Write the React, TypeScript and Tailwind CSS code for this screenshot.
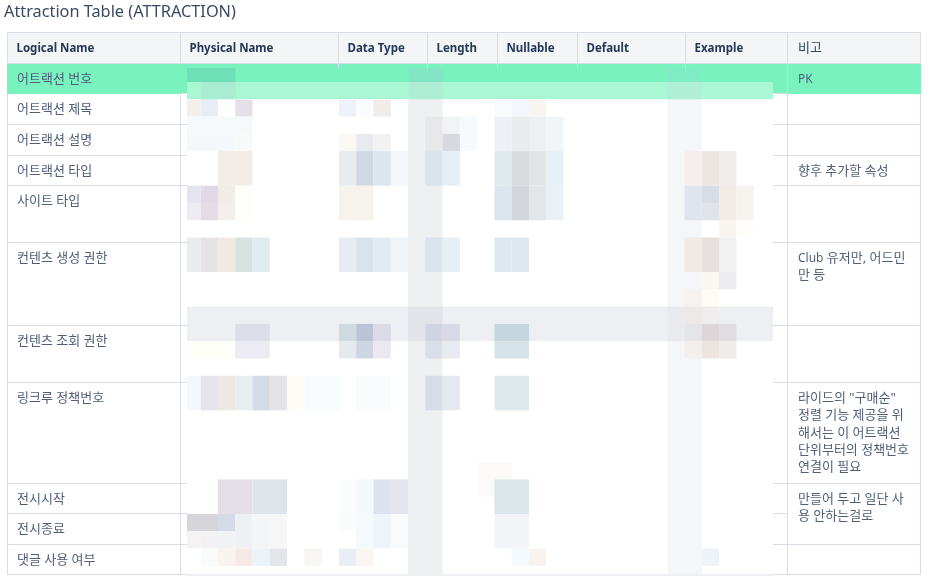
import type { ReactNode } from "react";

const STEP = 17.28;
const X0 = 183.4;
const Y0 = 82;

// [firstCol, firstRow, colSpan, rowSpan, colour]
const blocks: [number, number, number, number, string][] = [
  [13, -1, 2, 30, "#eff0f2"],
  [28, -1, 2, 30, "#f5f6f8"],
  [0, 1, 1, 1, "#f3efea"], [1, 1, 1, 1, "#e8edf4"], [3, 1, 1, 1, "#e5e0e8"],
  [9, 1, 1, 1, "#eef1f7"], [10, 1, 1, 1, "#fbfcfd"], [11, 1, 1, 1, "#f0ecea"],
  [18, 1, 1, 1, "#fafbfd"], [19, 1, 1, 1, "#f3f7fc"], [20, 1, 1, 1, "#f8f4ef"],
  [0, 2, 4, 1, "#f5f9fc"], [14, 2, 1, 2, "#e8e8ea"], [15, 2, 1, 1, "#f2f3f4"], [16, 2, 1, 2, "#f7fafd"],
  [18, 2, 1, 2, "#edf1f5"], [19, 2, 1, 2, "#e9ebed"], [20, 2, 1, 2, "#eeeff0"], [21, 2, 1, 2, "#f2f5f8"],
  [0, 3, 3, 1, "#f4f8fb"], [3, 3, 1, 1, "#f8faf9"], [9, 3, 1, 1, "#fbf8f3"], [10, 3, 1, 1, "#e9eaed"],
  [11, 3, 1, 1, "#f2f2f2"], [15, 3, 1, 1, "#d8d8df"],
  [2, 4, 2, 2, "#f3ede7"], [9, 4, 1, 2, "#e8ecee"], [10, 4, 1, 2, "#d0d8e3"], [11, 4, 1, 2, "#dde6ee"],
  [12, 4, 1, 2, "#f3f7fb"], [14, 4, 1, 2, "#dbe3ed"], [15, 4, 1, 2, "#e6edf5"],
  [18, 4, 1, 2, "#dfe9ee"], [19, 4, 1, 2, "#d8dcde"], [20, 4, 1, 2, "#e0e4e5"], [21, 4, 1, 2, "#e6f0f6"],
  [29, 4, 1, 2, "#f4efec"], [30, 4, 1, 2, "#ece5e2"], [31, 4, 1, 2, "#f0edec"],
  [0, 6, 1, 1, "#e6e4ee"], [1, 6, 1, 1, "#e0d9e5"], [2, 6, 1, 1, "#f0ece8"], [3, 6, 1, 2, "#fefefb"],
  [0, 7, 1, 1, "#eeebf2"], [1, 7, 1, 1, "#e4dde6"], [2, 7, 1, 1, "#f1eeeb"],
  [9, 6, 2, 2, "#f6f2ec"],
  [18, 6, 1, 2, "#dae5ee"], [19, 6, 1, 2, "#d3d7dc"], [20, 6, 1, 2, "#e3e6e8"], [21, 6, 1, 2, "#e9f1f7"],
  [29, 6, 1, 2, "#e0e4ec"], [30, 6, 1, 1, "#d8dce5"], [30, 7, 1, 1, "#e0e3ea"],
  [31, 6, 1, 2, "#f0ebe5"], [32, 6, 1, 2, "#f6f3ee"], [31, 8, 1, 1, "#f8f5f1"], [32, 8, 1, 1, "#fffdf9"],
  [0, 9, 1, 2, "#e9ebed"], [1, 9, 1, 2, "#e6e3e5"], [2, 9, 1, 2, "#f1e9e4"], [3, 9, 1, 2, "#d8e2e0"], [4, 9, 1, 2, "#e0ebf0"],
  [9, 9, 1, 2, "#e7ebf3"], [10, 9, 1, 2, "#d8e3ee"], [11, 9, 1, 2, "#e0ebf3"], [12, 9, 1, 2, "#eef4f8"],
  [14, 9, 1, 2, "#dae3ed"], [15, 9, 1, 2, "#e7eff6"], [18, 9, 1, 2, "#dde9ee"], [19, 9, 1, 2, "#dfe8ef"],
  [29, 9, 1, 2, "#f0e9e4"], [30, 9, 1, 2, "#e8e0de"], [31, 9, 1, 2, "#f1f0f2"],
  [30, 11, 1, 1, "#faf6f2"], [31, 11, 1, 1, "#ebebf0"], [29, 12, 1, 1, "#f6f2ef"], [30, 12, 1, 1, "#fffbf6"],
  [0, 13, 35, 2, "#eeeff3"], [13, 13, 2, 2, "#e3e4ea"], [28, 13, 1, 2, "#e9eaee"], [29, 13, 1, 1, "#ede9e8"], [30, 13, 1, 1, "#f0eeec"],
  [3, 14, 2, 1, "#dcdde6"], [9, 14, 1, 1, "#d0d8e0"], [10, 14, 1, 1, "#bcc3d4"], [11, 14, 1, 1, "#dcdae6"],
  [14, 14, 1, 1, "#d0d4e0"], [15, 14, 1, 1, "#d8d9e4"], [18, 14, 2, 1, "#c5d6df"],
  [29, 14, 1, 1, "#e4e5e7"], [30, 14, 1, 1, "#dcd6d6"], [31, 14, 1, 1, "#e0dde0"],
  [0, 15, 3, 1, "#fefef9"], [3, 15, 2, 1, "#ecebf3"], [9, 15, 1, 1, "#e4eaec"], [10, 15, 1, 1, "#cdd4e2"], [11, 15, 1, 1, "#ece8f2"],
  [14, 15, 1, 1, "#dadee8"], [15, 15, 1, 1, "#e8eaf1"], [18, 15, 2, 1, "#d6e4ea"],
  [29, 15, 1, 1, "#f3efed"], [30, 15, 1, 1, "#ece4e1"], [31, 15, 1, 1, "#f0ecea"],
  [0, 17, 1, 2, "#f4f7fb"], [1, 17, 1, 2, "#e4e4ea"], [2, 17, 1, 2, "#ece8e4"], [3, 17, 1, 2, "#e8eef0"],
  [4, 17, 1, 2, "#d3dbe6"], [5, 17, 1, 2, "#e4e3e7"], [6, 17, 1, 2, "#fffbf7"], [7, 17, 2, 2, "#f8fbfd"],
  [10, 17, 2, 2, "#fafbfc"], [14, 17, 1, 2, "#d8dce6"], [15, 17, 1, 2, "#e6e8f0"], [18, 17, 2, 2, "#dde7ec"],
  [17, 22, 2, 2, "#fdfbfa"],
  [2, 23, 2, 2, "#e4dfe6"], [4, 23, 2, 2, "#dfe4ea"], [9, 23, 1, 2, "#fafcfd"], [10, 23, 1, 2, "#f3f8fa"],
  [11, 23, 1, 2, "#dce2ee"], [12, 23, 1, 2, "#e4e4ee"], [18, 23, 2, 2, "#dce6ea"],
  [0, 25, 2, 1, "#d6d6da"], [2, 25, 1, 1, "#d4dbe6"], [3, 25, 1, 2, "#edf1f3"], [4, 25, 1, 2, "#f3f5f6"], [5, 25, 1, 2, "#f6f6f6"],
  [9, 25, 1, 1, "#fafbfc"], [10, 25, 1, 2, "#f5f9fb"], [11, 25, 1, 2, "#eff4f9"], [12, 25, 1, 2, "#f9fafc"], [18, 25, 2, 2, "#f2f4f7"],
  [0, 26, 1, 1, "#f4f2f3"], [1, 26, 1, 1, "#f2f1f3"], [2, 26, 1, 1, "#f0f2f3"],
  [1, 27, 1, 1, "#f9fafa"], [2, 27, 1, 1, "#f9f3ef"], [3, 27, 1, 1, "#f4e9e4"], [4, 27, 1, 1, "#ebf2f8"], [5, 27, 1, 1, "#e3e5e9"],
  [7, 27, 1, 1, "#f7f6f4"], [9, 27, 1, 1, "#e9eef5"], [10, 27, 1, 1, "#f9f6f1"], [19, 27, 1, 1, "#f3f9fc"], [20, 27, 1, 1, "#f8f3ee"],
  [30, 27, 1, 1, "#eef3f7"],
];

function Mosaic() {
  return (
    <svg className="absolute left-0 top-0 pointer-events-none" width={936} height={583} viewBox="0 0 936 583">
      <defs>
        <clipPath id="mosaic-clip">
          <rect x={187} y={99.3} width={586} height={475} />
        </clipPath>
      </defs>
      <rect x={187} y={68} width={586} height={14} fill="#79f2c0" />
      <rect x={187} y={82} width={586} height={17.3} fill="#aaf7d6" />
      <rect x={187} y={99.3} width={586} height={475} fill="#ffffff" />
      <g clipPath="url(#mosaic-clip)">
        {blocks.map(([c, r, cs, rs, fill], i) => (
          <rect key={i} x={X0 + c * STEP} y={Y0 + r * STEP} width={cs * STEP} height={rs * STEP} fill={fill} />
        ))}
      </g>
      <rect x={187} y={68} width={48.4} height={14} fill="#6ee0b8" />
      <rect x={408.7} y={68} width={34.6} height={14} fill="#82e6c4" />
      <rect x={667.2} y={68} width={34.6} height={14} fill="#80ecc6" />
      <rect x={200.7} y={82} width={34.6} height={17.3} fill="#a8ecd2" />
      <rect x={408.7} y={82} width={34.6} height={17.3} fill="#aeeed4" />
      <rect x={667.2} y={82} width={34.6} height={17.3} fill="#aeefd6" />
      <rect x={187} y={574} width={586} height={2} fill="#eff0f3" />
    </svg>
  );
}

const headers = ["Logical Name", "Physical Name", "Data Type", "Length", "Nullable", "Default", "Example"];

const latin = "text-[12px]";

const rows: { name: string; note?: ReactNode[]; span?: number; skipNote?: boolean; h: string; green?: boolean }[] = [
  { name: "어트랙션 번호", note: [<span className={latin}>PK</span>], h: "h-[30px]", green: true },
  { name: "어트랙션 제목", note: [], h: "h-[31px]" },
  { name: "어트랙션 설명", note: [], h: "h-[31px]" },
  { name: "어트랙션 타입", note: ["향후 추가할 속성"], h: "h-[30px]" },
  { name: "사이트 타입", note: [], h: "h-[57px]" },
  {
    name: "컨텐츠 생성 권한",
    note: [<><span className={latin}>Club</span> 유저만, 어드민</>, "만 등"],
    h: "h-[83px]",
  },
  { name: "컨텐츠 조회 권한", note: [], h: "h-[57px]" },
  {
    name: "링크루 정책번호",
    note: ['라이드의 "구매순"', "정렬 기능 제공을 위", "해서는 이 어트랙션", "단위부터의 정책번호", "연결이 필요"],
    h: "h-[101px]",
  },
  { name: "전시시작", note: ["만들어 두고 일단 사", "용 안하는걸로"], span: 2, h: "h-[30px]" },
  { name: "전시종료", skipNote: true, h: "h-[31px]" },
  { name: "댓글 사용 여부", note: [], h: "h-[30px]" },
];

export default function App() {
  return (
    <div className="relative w-[936px] h-[583px] overflow-hidden bg-white font-['Noto_Sans','Noto_Sans_CJK_KR',sans-serif]">
      <div className="blur-[0.35px]">
        <h2 className="pl-[4px] pt-[1px] h-[32px] text-[16.3px] leading-[21px] font-normal text-[#3b4a63]">
          Attraction Table (ATTRACTION)
        </h2>
        <table className="ml-[7px] w-[913px] table-fixed border-collapse text-[13px] leading-[17.3px] text-[#505f79]">
          <colgroup>
            <col className="w-[173px]" />
            <col className="w-[158px]" />
            <col className="w-[89px]" />
            <col className="w-[70px]" />
            <col className="w-[80px]" />
            <col className="w-[108px]" />
            <col className="w-[102px]" />
            <col className="w-[133px]" />
          </colgroup>
          <thead>
            <tr className="h-[31px] bg-[#f4f5f7]">
              {headers.map((h) => (
                <th key={h} className="border border-[#d9dbe4] pl-[8.5px] pr-[9px] text-left text-[11.5px] font-bold text-[#253858]">
                  {h}
                </th>
              ))}
              <th className="border border-[#d9dbe4] px-[10px] text-left font-normal text-[#344563]">비고</th>
            </tr>
          </thead>
          <tbody>
            {rows.map((r) => (
              <tr key={r.name} className={`${r.h} ${r.green ? "bg-[#79f2c0]" : "bg-white"}`}>
                <td className={`border align-top px-[9px] pt-[6px] ${r.green ? "border-[#79f2c0]" : "border-[#d9dce6]"}`}>
                  {r.name}
                </td>
                {headers.slice(1).map((h) => (
                  <td key={h} className="border border-[#d9dce6]" />
                ))}
                {!r.skipNote && (
                  <td
                    rowSpan={r.span ?? 1}
                    className={`border align-top px-[10px] pt-[6px] whitespace-nowrap ${
                      r.green ? "border-[#79f2c0]" : "border-[#d9dce6]"
                    }`}
                  >
                    {(r.note ?? []).map((line, i) => (
                      <div key={i}>{line}</div>
                    ))}
                  </td>
                )}
              </tr>
            ))}
          </tbody>
        </table>
      </div>
      <Mosaic />
    </div>
  );
}
